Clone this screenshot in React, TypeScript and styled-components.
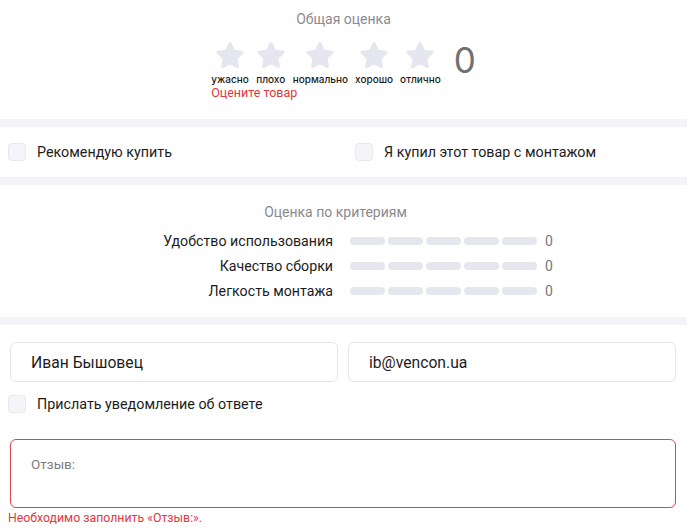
import styled, { createGlobalStyle } from "styled-components";

const GlobalStyle = createGlobalStyle`
  body {
    margin: 0;
    background: #ffffff;
    font-family: Roboto, "Liberation Sans", sans-serif;
    color: #1c1c1c;
  }
`;

const Page = styled.div`
  width: 687px;
  display: flex;
  flex-direction: column;
`;

const Separator = styled.div`
  height: 8px;
  background: #f3f3f8;
`;

const RatingBlock = styled.section`
  height: 119px;
  box-sizing: border-box;
  padding-top: 11px;
  display: flex;
  flex-direction: column;
  align-items: center;
`;

const SectionTitle = styled.div`
  font-size: 14px;
  line-height: 16px;
  color: #8a8a8f;
  text-align: center;
`;

const RatingInner = styled.div`
  margin-top: 14px;
  margin-left: 0;
  display: flex;
  flex-direction: column;
`;

const StarsRow = styled.div`
  display: flex;
  align-items: flex-start;
  gap: 7px;
`;

const StarItem = styled.div`
  display: flex;
  flex-direction: column;
  align-items: center;
  cursor: pointer;
`;

const StarLabel = styled.span`
  font-family: Inter, "Noto Sans", sans-serif;
  font-size: 10px;
  font-weight: 500;
  line-height: 11px;
  margin-top: 3px;
  color: #1c1c1c;
`;

const BigScore = styled.span`
  font-family: Inter, "Noto Sans", sans-serif;
  font-size: 35px;
  line-height: 40px;
  color: #717175;
  margin-left: 6px;
  margin-top: -1px;
`;

const RateError = styled.div`
  font-size: 12.5px;
  line-height: 14px;
  color: #e0383e;
  margin-top: 1px;
`;

const CheckRow = styled.section`
  height: 50px;
  display: flex;
  align-items: center;
  padding-left: 8px;
`;

const CheckLabel = styled.label<{ $width?: number }>`
  display: flex;
  align-items: center;
  gap: 11px;
  font-size: 14.3px;
  color: #1c1c1c;
  cursor: pointer;
  width: ${(p) => (p.$width ? `${p.$width}px` : "auto")};
`;

const Box = styled.span`
  width: 18px;
  height: 18px;
  box-sizing: border-box;
  border-radius: 4px;
  border: 1px solid #e8e8ef;
  background: #f4f4f9;
  flex-shrink: 0;
`;

const CriteriaBlock = styled.section`
  height: 132px;
  box-sizing: border-box;
  padding-top: 19px;
  display: flex;
  flex-direction: column;
`;

const CriteriaTitle = styled(SectionTitle)`
  padding-right: 16px;
`;

const CriteriaGrid = styled.div`
  margin-top: 8px;
  display: grid;
  grid-template-columns: 333px 187px auto;
  column-gap: 17px;
  grid-auto-rows: 25px;
  align-items: center;
`;

const CriteriaName = styled.span`
  font-size: 14.2px;
  text-align: right;
  color: #1c1c1c;
`;

const Bar = styled.div`
  display: flex;
  gap: 3px;
`;

const Segment = styled.span`
  flex: 1;
  height: 8px;
  border-radius: 4px;
  background: #e6e6ef;
`;

const CriteriaValue = styled.span`
  font-size: 14px;
  color: #77777c;
  margin-left: -9px;
`;

const FormBlock = styled.section`
  padding: 17px 11px 0 8px;
  display: flex;
  flex-direction: column;
`;

const InputsRow = styled.div`
  display: flex;
  gap: 10px;
  padding-left: 2px;
`;

const Input = styled.div`
  flex: 1;
  height: 40px;
  box-sizing: border-box;
  border: 1px solid #e6e6e9;
  border-radius: 6px;
  padding-left: 20px;
  display: flex;
  align-items: center;
  font-size: 15.7px;
  color: #1c1c1c;
`;

const NotifyRow = styled.div`
  margin-top: 13px;
  display: flex;
`;

const TextArea = styled.div`
  margin-top: 26px;
  margin-left: 2px;
  height: 69px;
  box-sizing: border-box;
  border: 1px solid #d8484c;
  border-radius: 6px;
  padding: 16px 20px;
  font-size: 13.5px;
  color: #7c7c80;
`;

const FieldError = styled.div`
  margin-top: 3px;
  font-size: 12.3px;
  line-height: 14px;
  color: #e0383e;
`;

const Star = () => (
  <svg width="30" height="30" viewBox="0 0 28 28">
    <path
      d="M14 2.5 L17.4 9.6 L25.2 10.6 L19.5 16 L20.9 23.8 L14 20 L7.1 23.8 L8.5 16 L2.8 10.6 L10.6 9.6 Z"
      fill="#e6e6f0"
      stroke="#e6e6f0"
      strokeWidth="3"
      strokeLinejoin="round"
    />
  </svg>
);

const starLabels = ["ужасно", "плохо", "нормально", "хорошо", "отлично"];
const criteria = ["Удобство использования", "Качество сборки", "Легкость монтажа"];

export default function App() {
  return (
    <Page>
      <GlobalStyle />
      <RatingBlock>
        <SectionTitle>Общая оценка</SectionTitle>
        <RatingInner>
          <StarsRow>
            {starLabels.map((l) => (
              <StarItem key={l}>
                <Star />
                <StarLabel>{l}</StarLabel>
              </StarItem>
            ))}
            <BigScore>0</BigScore>
          </StarsRow>
          <RateError>Оцените товар</RateError>
        </RatingInner>
      </RatingBlock>
      <Separator />
      <CheckRow>
        <CheckLabel $width={347}>
          <Box />
          Рекомендую купить
        </CheckLabel>
        <CheckLabel>
          <Box />Я купил этот товар с монтажом
        </CheckLabel>
      </CheckRow>
      <Separator />
      <CriteriaBlock>
        <CriteriaTitle>Оценка по критериям</CriteriaTitle>
        <CriteriaGrid>
          {criteria.map((c) => (
            <>
              <CriteriaName key={c}>{c}</CriteriaName>
              <Bar>
                {[0, 1, 2, 3, 4].map((i) => (
                  <Segment key={i} />
                ))}
              </Bar>
              <CriteriaValue>0</CriteriaValue>
            </>
          ))}
        </CriteriaGrid>
      </CriteriaBlock>
      <Separator />
      <FormBlock>
        <InputsRow>
          <Input>Иван Бышовец</Input>
          <Input>ib@vencon.ua</Input>
        </InputsRow>
        <NotifyRow>
          <CheckLabel>
            <Box />
            Прислать уведомление об ответе
          </CheckLabel>
        </NotifyRow>
        <TextArea>Отзыв:</TextArea>
        <FieldError>Необходимо заполнить «Отзыв:».</FieldError>
      </FormBlock>
    </Page>
  );
}
